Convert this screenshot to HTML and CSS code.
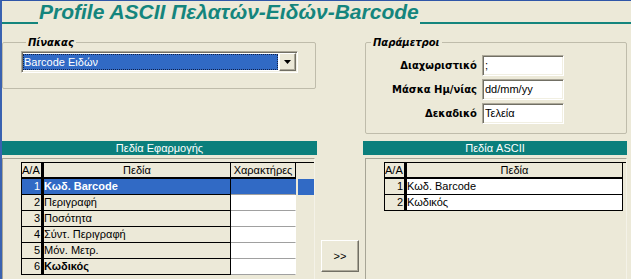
FILE: index.html
```html
<!DOCTYPE html>
<html lang="el">
<head>
<meta charset="utf-8">
<title>Profile ASCII</title>
<link rel="stylesheet" href="styles.css">
</head>
<body>
<h1 class="title"><span class="rule-l"></span><span class="text">Profile ASCII Πελατών-Ειδών-Barcode</span><span class="rule-r"></span></h1>

<div class="top">
  <fieldset class="group group-table">
    <legend>Πίνακας</legend>
    <div class="combo">
      <div class="combo-sel">Barcode Ειδών</div>
      <div class="combo-btn"><svg width="7" height="4" viewBox="0 0 7 4"><polygon points="0,0 7,0 3.5,4" fill="#000"/></svg></div>
    </div>
  </fieldset>

  <fieldset class="group group-params">
    <legend>Παράμετροι</legend>
    <div class="params">
      <label class="plabel">Διαχωριστικό</label><div class="input">;</div>
      <label class="plabel">Μάσκα Ημ/νίας</label><div class="input">dd/mm/yy</div>
      <label class="plabel">Δεκαδικό</label><div class="input">Τελεία</div>
    </div>
  </fieldset>
</div>

<div class="bottom">
  <section class="panel panel-left">
    <div class="bar">Πεδία Εφαρμογής</div>
    <div class="frame">
      <div class="grid">
        <div class="row head">
          <div class="c aa hc">A/A</div><div class="c fld fld-l hc">Πεδία</div><div class="c chr hc">Χαρακτήρες</div>
        </div>
        <div class="row sel">
          <div class="c aa">1</div><div class="c fld fld-l b">Κωδ. Barcode</div><div class="c chr"></div><div class="tail"></div>
        </div>
        <div class="row">
          <div class="c aa">2</div><div class="c fld fld-l">Περιγραφή</div><div class="c chr"></div>
        </div>
        <div class="row">
          <div class="c aa">3</div><div class="c fld fld-l">Ποσότητα</div><div class="c chr"></div>
        </div>
        <div class="row">
          <div class="c aa">4</div><div class="c fld fld-l">Σύντ. Περιγραφή</div><div class="c chr"></div>
        </div>
        <div class="row">
          <div class="c aa">5</div><div class="c fld fld-l">Μόν. Μετρ.</div><div class="c chr"></div>
        </div>
        <div class="row">
          <div class="c aa">6</div><div class="c fld fld-l b">Κωδικός</div><div class="c chr"></div>
        </div>
      </div>
    </div>
  </section>

  <div class="middle">
    <button class="move" type="button">&gt;&gt;</button>
  </div>

  <section class="panel panel-right">
    <div class="bar">Πεδία ASCII</div>
    <div class="frame">
      <div class="grid">
        <div class="row head">
          <div class="c aa hc">A/A</div><div class="c fld fld-r hc">Πεδία</div>
        </div>
        <div class="row">
          <div class="c aa">1</div><div class="c fld fld-r white">Κωδ. Barcode</div>
        </div>
        <div class="row">
          <div class="c aa">2</div><div class="c fld fld-r white">Κωδικός</div>
        </div>
      </div>
    </div>
  </section>
</div>
</body>
</html>
```
FILE: styles.css
```css
* { box-sizing: border-box; }
html { margin: 0; background: #ece9d8; }
body {
  margin: 0;
  width: 631px;
  height: 279px;
  overflow: hidden;
  background: #ece9d8;
  border-top: 1px solid #2f56a8;
  border-left: 2px solid #3a62b0;
  font: 11px "Liberation Sans", Arial, sans-serif;
  color: #000;
}

/* title */
.title {
  display: flex;
  align-items: flex-start;
  height: 35px;
  margin: 0;
}
.rule-l { flex: 0 0 36px; height: 23px; border-bottom: 2px solid #14857d; }
.rule-r { flex: 1; height: 23px; border-bottom: 2px solid #14857d; }
.title .text {
  font: italic bold 21px/21px "Liberation Sans", Arial, sans-serif;
  color: #14857d;
  white-space: nowrap;
  padding: 0 1px;
}

/* top row */
.top { display: flex; align-items: flex-start; }
.group {
  margin: 0;
  padding: 0;
  border: 1px solid #bfbcab;
  border-radius: 2px;
  min-width: 0;
}
.group legend {
  font: italic bold 10px/13px "DejaVu Sans", sans-serif;
  padding: 0 2px;
  margin-left: 5px;
}
.group-table { width: 314px; padding: 2px 0 15px 18px; }
.group-params { width: 262px; margin-left: 49px; padding: 6px 0 9px 0; }

.combo {
  display: flex;
  width: 277px;
  height: 22px;
  border: 1px solid;
  border-color: #aca899 #fff #fff #aca899;
  padding: 1px;
  box-shadow: inset 1px 1px #716f64, inset -1px -1px #f1efe2;
  background: #fff;
}
.combo-sel {
  flex: 1;
  margin: 1px 1px 1px 0;
  background: #316ac5;
  color: #fff;
  border: 1px dotted #10204a;
  line-height: 14px;
  padding-left: 0;
  white-space: nowrap;
}
.combo-btn {
  flex: 0 0 17px;
  display: flex;
  align-items: center;
  justify-content: center;
  background: #ece9d8;
  border: 1px solid;
  border-color: #fff #716f64 #716f64 #fff;
  box-shadow: inset -1px -1px #aca899;
}

.params {
  display: grid;
  grid-template-columns: 111px 82px;
  grid-auto-rows: 21px;
  gap: 3px 5px;
}
.plabel {
  font: bold 10px "DejaVu Sans", sans-serif;
  text-align: right;
  align-self: center;
}
.input {
  background: #fff;
  border: 1px solid;
  border-color: #aca899 #fff #fff #aca899;
  box-shadow: inset 1px 1px #716f64, inset -1px -1px #f1efe2;
  padding: 2px 3px 0 2px;
  line-height: 15px;
  white-space: nowrap;
}

/* bottom row */
.bottom { display: flex; align-items: flex-start; margin-top: 7px; }
.panel-left { width: 315px; }
.panel-right { width: 264px; }
.middle { width: 46px; padding-left: 4px; }
.bar {
  height: 14px;
  line-height: 14px;
  background: #0b7f7c;
  color: #fff;
  text-align: center;
  white-space: nowrap;
}
.frame {
  margin-top: 3px;
  height: 130px;
  border: 1px solid #a7a596;
  border-right-color: #f4f2e8;
  padding: 3px 0 0 18px;
}
.panel-left .frame { width: 313px; }
.panel-right .frame { margin-left: 2px; width: 262px; }

.grid {
  display: flex;
  flex-direction: column;
  border-top: 1px solid #000;
  border-left: 1px solid #000;
}
.row { display: flex; height: 16px; }
.c {
  height: 100%;
  border-right: 1px solid #000;
  border-bottom: 1px solid #000;
  line-height: 15px;
  white-space: nowrap;
  overflow: hidden;
}
.head .c { border-bottom-width: 2px; line-height: 14px; text-align: center; }
.aa { width: 22px; border-right-width: 3px; text-align: right; padding-right: 1px; }
.head .aa { text-align: left; padding: 0; }
.fld { padding-left: 0; }
.fld-l { width: 187px; }
.fld-r { width: 216px; }
.chr { width: 65px; background: #fff; border-right-color: #fff; border-bottom-color: #a0a0a0; }
.head .chr { background: transparent; border-right-color: #000; border-bottom-color: #000; }
.white { background: #fff; }
.b { font-weight: bold; }

.sel .c { background: #316ac5; color: #fff; }
.sel .chr { border-right-color: #316ac5; }
.tail { width: 16px; margin-left: 2px; height: 100%; background: #316ac5; }

.move {
  margin-top: 99px;
  width: 38px;
  height: 32px;
  padding: 0;
  background: #ece9d8;
  border: 1px solid;
  border-color: #fff #716f64 #716f64 #fff;
  box-shadow: inset -1px -1px #aca899;
  font: 11px "Liberation Sans", Arial, sans-serif;
  color: #000;
}
```
